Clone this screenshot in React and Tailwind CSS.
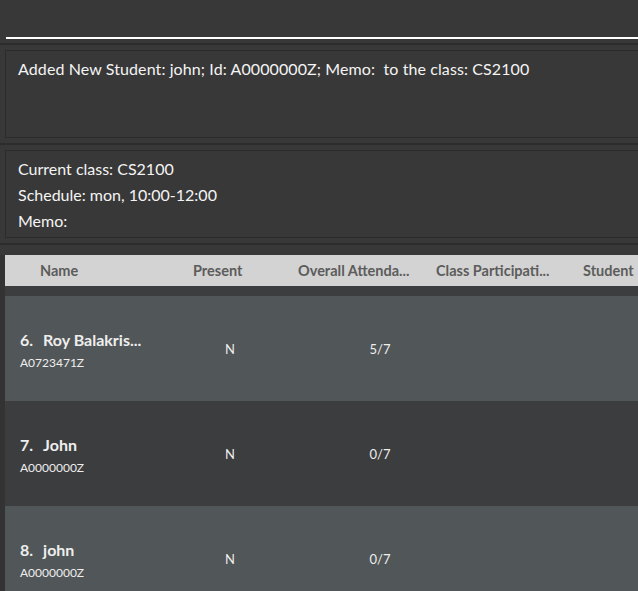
export default function App() {
  const rows = [
    { idx: "6.", name: "Roy Balakris...", id: "A0723471Z", present: "N", att: "5/7", bg: "bg-[#515658]" },
    { idx: "7.", name: "John", id: "A0000000Z", present: "N", att: "0/7", bg: "bg-[#3c3d3f]" },
    { idx: "8.", name: "john", id: "A0000000Z", present: "N", att: "0/7", bg: "bg-[#515658]" },
  ];
  return (
    <div
      className="w-[638px] h-[591px] overflow-hidden bg-[#383838] flex flex-col"
      style={{ fontFamily: "Lato, 'Open Sans', sans-serif" }}
    >
      {/* command box */}
      <div className="h-[37px] shrink-0" />
      <div className="ml-[6px] h-[2px] bg-white shrink-0" />
      <div className="mt-[4px] h-[2px] bg-[#2c2c2c] shrink-0" />

      {/* result display */}
      <div className="mt-[5px] ml-[5px] mr-[-10px] h-[88px] shrink-0 border border-[#2b2b2b] px-[12px] pt-[7px]">
        <p className="text-[16px] leading-[22px] text-[#f4f4f4] tracking-[0.1px]">
          Added New Student: john; Id: A0000000Z; Memo:&nbsp; to the class: CS2100
        </p>
      </div>
      <div className="mt-[5px] h-[2px] bg-[#2c2c2c] shrink-0" />

      {/* class info */}
      <div className="mt-[5px] ml-[5px] mr-[-10px] h-[88px] shrink-0 border border-[#2b2b2b] px-[12px] pt-[5px]">
        <p className="text-[16px] leading-[26px] text-[#f4f4f4]">Current class: CS2100</p>
        <p className="text-[16px] leading-[26px] text-[#f4f4f4]">Schedule: mon, 10:00-12:00</p>
        <p className="text-[16px] leading-[26px] text-[#f4f4f4]">Memo:</p>
      </div>
      <div className="mt-[5px] h-[2px] bg-[#2c2c2c] shrink-0" />

      {/* table */}
      <div className="flex-1 flex mt-[10px]">
        <div className="w-[5px] bg-[#333333] shrink-0" />
        <div className="flex-1 flex flex-col bg-[#3c3d3f] min-w-0">
          <div className="h-[31px] shrink-0 bg-[#d3d3d3] grid grid-cols-[188px_105px_138px_147px_1fr] items-center text-[14.5px] font-bold text-[#5c5c5c] whitespace-nowrap overflow-hidden">
            <div className="pl-[35px]">Name</div>
            <div>Present</div>
            <div>Overall Attenda...</div>
            <div>Class Participati...</div>
            <div>Student</div>
          </div>
          <div className="h-[10px] shrink-0" />
          {rows.map((r, i) => (
            <div key={i} className={`h-[105px] shrink-0 ${r.bg} flex items-center text-[#eeeeee]`}>
              <div className="w-[190px] pl-[15px] pt-[5px]">
                <div className="text-[16px] font-bold leading-[20px] whitespace-nowrap">
                  {r.idx}<span className="inline-block w-[10px]" />{r.name}
                </div>
                <div className="mt-[3px] text-[12px] leading-[20px]">{r.id}</div>
              </div>
              <div className="w-[70px] text-center text-[13px] pt-[2px]">{r.present}</div>
              <div className="w-[230px] text-center text-[13px] pt-[2px]">{r.att}</div>
            </div>
          ))}
        </div>
      </div>
    </div>
  );
}
